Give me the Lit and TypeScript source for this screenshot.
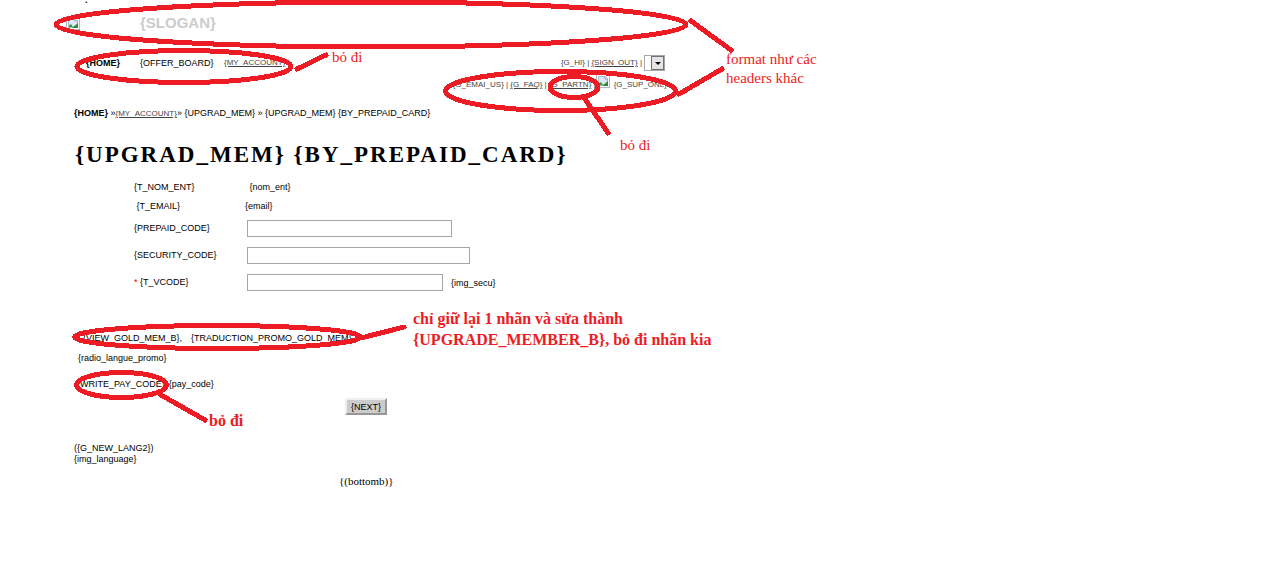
import { LitElement, html, svg, css } from "lit";
import { customElement } from "lit/decorators.js";

const ELLIPSES = [
  { cx: 371, cy: 24.5, rx: 315, ry: 22.5 },
  { cx: 184, cy: 66.5, rx: 107, ry: 16 },
  { cx: 560.5, cy: 91, rx: 115, ry: 19.5 },
  { cx: 574, cy: 87, rx: 24, ry: 10.5 },
  { cx: 217.5, cy: 337, rx: 143, ry: 11.5 },
  { cx: 121.5, cy: 385, rx: 45, ry: 12.5 },
];

const LINES = [
  [297, 69, 326, 55],
  [691, 21, 731, 50],
  [679, 94, 722, 69],
  [585, 99, 608, 133],
  [361, 338, 404, 327],
  [161, 395, 205, 420],
];

const brokenImage = html`<svg class="broken" viewBox="0 0 14 14" role="img" aria-label="missing image">
  <rect x="0.5" y="0.5" width="13" height="13" fill="#fff" stroke="#b4b4b4" />
  <path d="M2.5 2.5h7l2 2v7h-9z" fill="#dfe8f6" stroke="#a9b5cf" />
  <path d="M9 2.5v2.500h2.500" fill="#fff" stroke="#8d9dbd" />
  <path d="M3 11V9.500l2-1.500 2 3z" fill="#3c9a3c" />
  <path d="M6 12l6-5v5z" fill="#2f8a35" />
</svg>`;

/** Review marks drawn over the page: circles, pointers and remarks. */
@customElement("review-notes")
export class ReviewNotes extends LitElement {
  static styles = css`
    :host {
      position: absolute;
      inset: 0;
      pointer-events: none;
      color: #ed1c24;
      font-family: "Liberation Serif", "Times New Roman", serif;
      font-size: 15px;
      line-height: 19px;
      white-space: nowrap;
    }
    .marks {
      position: absolute;
      left: 0;
      top: 0;
      width: 740px;
      height: 430px;
      fill: none;
      stroke: #ed1c24;
      stroke-width: 5;
      stroke-linecap: round;
      shape-rendering: crispEdges;
    }
    .note {
      position: absolute;
      margin: 0;
    }
    .strong {
      font-size: 16px;
      line-height: 21px;
      font-weight: bold;
    }
    .nav { left: 332px; top: 48px; }
    .headers { left: 726px; top: 50px; }
    .partner { left: 620px; top: 136px; }
    .labels { left: 413px; top: 308px; }
    .code { left: 209px; top: 410px; }
  `;

  render() {
    return html`
      <svg class="marks" viewBox="0 0 740 430" aria-hidden="true">
        ${ELLIPSES.map((e) => svg`<ellipse cx=${e.cx} cy=${e.cy} rx=${e.rx} ry=${e.ry} />`)}
        ${LINES.map(([a, b, c, d]) => svg`<line x1=${a} y1=${b} x2=${c} y2=${d} />`)}
      </svg>
      <p class="note nav">bỏ đi</p>
      <p class="note headers">format như các<br />headers khác</p>
      <p class="note partner">bỏ đi</p>
      <p class="note strong labels">chỉ giữ lại 1 nhãn và sửa thành<br />{UPGRADE_MEMBER_B}, bỏ đi nhãn kia</p>
      <p class="note strong code">bỏ đi</p>
    `;
  }
}

@customElement("app-root")
export class AppRoot extends LitElement {
  static styles = css`
    :host {
      display: block;
      position: relative;
      min-height: 100vh;
      background: #fff;
      color: #000;
      font-family: "Liberation Sans", Arial, sans-serif;
      font-size: 9px;
      line-height: 12px;
    }
    .page { max-width: 667px; }
    .dot { padding-left: 85px; line-height: 1px; font-weight: bold; }
    .brand {
      display: flex;
      align-items: center;
      height: 44px;
      padding-left: 66px;
      gap: 60px;
    }
    .slogan {
      color: #ccc;
      font-size: 15px;
      line-height: 18px;
      font-weight: bold;
    }
    .broken { width: 14px; height: 14px; flex: none; }
    .bar {
      display: flex;
      justify-content: space-between;
      align-items: center;
      height: 18px;
      margin-top: 9px;
      padding: 0 2px 0 86px;
    }
    .menu, .user { display: flex; align-items: center; }
    .home { width: 54px; font-weight: bold; }
    .offer { width: 84px; }
    .small { font-size: 8px; color: #444; }
    a { color: #444; font-size: 8px; }
    .user { white-space: pre; }
    select {
      appearance: none;
      width: 21px;
      height: 16px;
      margin: 0 0 0 2px;
      padding: 0;
      border: 1px solid #a5a5ab;
      border-radius: 0;
      background: #fff;
    }
    .picker { display: grid; }
    .picker > * { grid-area: 1 / 1; }
    .arrow {
      justify-self: end;
      width: 14px;
      height: 16px;
      pointer-events: none;
    }
    .support {
      display: flex;
      justify-content: flex-end;
      align-items: center;
      height: 16px;
      margin-top: 5px;
      white-space: pre;
    }
    .support .broken { margin: 0 4px 8px 0; }
    .crumbs { margin-top: 14px; padding-left: 74px; }
    h1 {
      margin: 21px 0 0;
      padding-left: 75px;
      font-family: "Liberation Serif", "Times New Roman", serif;
      font-size: 23px;
      line-height: 28px;
      letter-spacing: 2px;
      white-space: nowrap;
    }
    form { margin: 0; }
    .row {
      display: grid;
      grid-template-columns: 111px 1fr;
      align-items: center;
      padding-left: 134px;
    }
    .first { margin-top: 12px; }
    .second { margin: 7px 0 8px; }
    .row + .entry { margin-top: 10px; }
    .second + .entry { margin-top: 0; }
    .field { display: flex; align-items: center; gap: 8px; padding-left: 2px; }
    label { line-height: 12px; padding-bottom: 2px; }
    input {
      box-sizing: border-box;
      height: 17px;
      margin: 0;
      padding: 0 2px;
      border: 1px solid #a5a5ab;
      font: inherit;
    }
    .prepaid { width: 205px; }
    .security { width: 223px; }
    .vcode { width: 196px; }
    .star { color: #e00000; }
    .labels { display: flex; gap: 9px; margin-top: 41px; padding-left: 83px; }
    .promo { margin-top: 8px; padding-left: 78px; }
    .pay { display: flex; gap: 4px; margin-top: 14px; padding-left: 77px; }
    .next {
      display: block;
      width: 42px;
      height: 17px;
      margin: 8px 0 0 345px;
      padding: 0;
      border: 2px solid;
      border-color: #efefef #979797 #979797 #efefef;
      background: #ccc;
      color: #000;
      font: inherit;
    }
    .lang { margin-top: 28px; padding-left: 74px; line-height: 11px; }
    .bottom {
      margin-top: 9px;
      padding-left: 339px;
      font-family: "Liberation Serif", "Times New Roman", serif;
      font-size: 11px;
      line-height: 14px;
    }
  `;

  render() {
    return html`
      <div class="page">
        <header>
          <div class="dot">.</div>
          <div class="brand">${brokenImage}<span class="slogan">{SLOGAN}</span></div>
          <div class="bar">
            <nav class="menu">
              <span class="home">{HOME}</span><span class="offer">{OFFER_BOARD}</span><a href="#account">{MY_ACCOUNT}</a>
            </nav>
            <div class="user small"><span>{G_HI} | <a href="#out">{SIGN_OUT}</a> |</span><span class="picker"><select aria-label="Language"></select><svg class="arrow" viewBox="0 0 14 16" aria-hidden="true"><rect x="0.500" y="1.500" width="12" height="13" fill="#e4e4e4" stroke="#707070" /><path d="M4 7h6L7 10z" fill="#000" /></svg></span></div>
          </div>
          <div class="support small"><span>{G_EMAI_US} | <a href="#faq">{G_FAQ}</a> | <a href="#partners">{G_PARTN}</a> |</span>${brokenImage}<span>{G_SUP_ONL}</span></div>
        </header>
        <div class="crumbs"><b>{HOME}</b> »<a href="#account">{MY_ACCOUNT}</a>» {UPGRAD_MEM} » {UPGRAD_MEM} {BY_PREPAID_CARD}</div>
        <h1>{UPGRAD_MEM} {BY_PREPAID_CARD}</h1>
        <form @submit=${(e: Event) => e.preventDefault()}>
          <div class="row first"><span>{T_NOM_ENT}</span><span class="field">&nbsp;{nom_ent}</span></div>
          <div class="row second"><span>&nbsp;{T_EMAIL}</span><span>{email}</span></div>
          <div class="row entry">
            <label for="prepaid">{PREPAID_CODE}</label>
            <div class="field"><input id="prepaid" class="prepaid" type="text" /></div>
          </div>
          <div class="row entry">
            <label for="security">{SECURITY_CODE}</label>
            <div class="field"><input id="security" class="security" type="text" /></div>
          </div>
          <div class="row entry">
            <label for="vcode"><span class="star">*</span> {T_VCODE}</label>
            <div class="field"><input id="vcode" class="vcode" type="text" /><span>{img_secu}</span></div>
          </div>
          <div class="labels"><span>{VIEW_GOLD_MEM_B},</span><span>{TRADUCTION_PROMO_GOLD_MEM}</span></div>
          <div class="promo">{radio_langue_promo}</div>
          <div class="pay"><span>{WRITE_PAY_CODE}</span><span>{pay_code}</span></div>
          <button class="next" type="submit">{NEXT}</button>
        </form>
        <footer>
          <div class="lang">({G_NEW_LANG2})<br />{img_language}</div>
          <div class="bottom">{(bottomb)}</div>
        </footer>
      </div>
      <review-notes></review-notes>
    `;
  }
}
